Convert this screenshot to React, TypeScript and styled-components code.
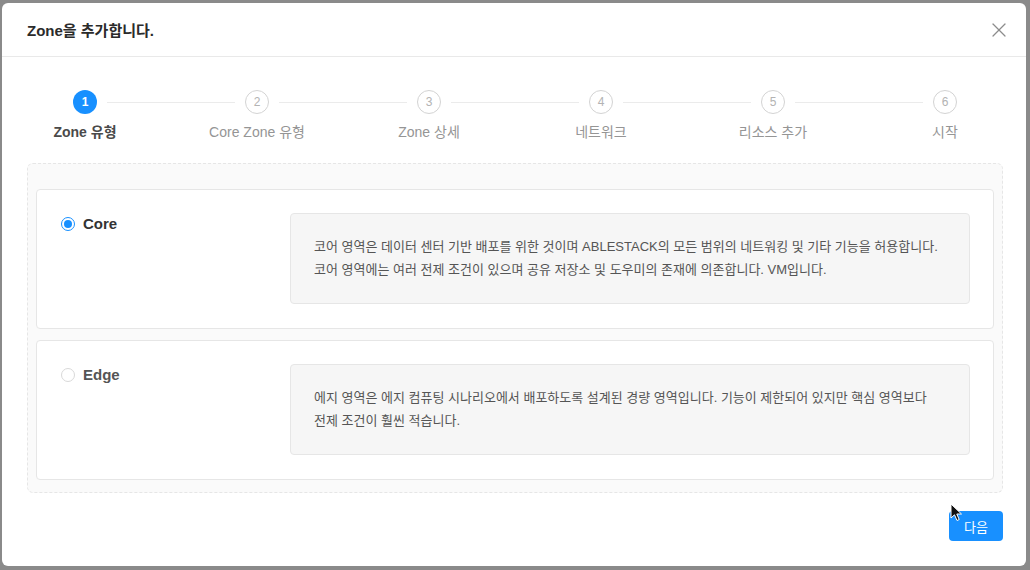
import { FC } from 'react';
import styled, { createGlobalStyle } from 'styled-components';
import { X } from 'lucide-react';

const GlobalStyle = createGlobalStyle`
  html, body {
    margin: 0;
    padding: 0;
    background: #8a8a8a;
  }
  body {
    font-family: "Liberation Sans", "Noto Sans CJK KR", sans-serif;
    -webkit-font-smoothing: antialiased;
  }
`;

const steps = ['Zone 유형', 'Core Zone 유형', 'Zone 상세', '네트워크', '리소스 추가', '시작'];

const zoneTypes = [
  {
    key: 'core',
    label: 'Core',
    checked: true,
    lines: [
      '코어 영역은 데이터 센터 기반 배포를 위한 것이며 ABLESTACK의 모든 범위의 네트워킹 및 기타 기능을 허용합니다.',
      '코어 영역에는 여러 전제 조건이 있으며 공유 저장소 및 도우미의 존재에 의존합니다. VM입니다.',
    ],
  },
  {
    key: 'edge',
    label: 'Edge',
    checked: false,
    lines: [
      '에지 영역은 에지 컴퓨팅 시나리오에서 배포하도록 설계된 경량 영역입니다. 기능이 제한되어 있지만 핵심 영역보다',
      '전제 조건이 훨씬 적습니다.',
    ],
  },
];

const App: FC = () => {
  return (
    <>
      <GlobalStyle />
      <PageStyled>
        <ModalStyled>
          <HeaderStyled>
            <TitleStyled>Zone을 추가합니다.</TitleStyled>
            <CloseStyled>
              <X size={24} strokeWidth={1.2} />
            </CloseStyled>
          </HeaderStyled>
          <BodyStyled>
            <StepsStyled>
              {steps.map((title, i) => (
                <StepStyled key={title} last={i === steps.length - 1}>
                  <StepHeadStyled>
                    <StepIconStyled active={i === 0}>{i + 1}</StepIconStyled>
                    {i < steps.length - 1 && <StepTailStyled />}
                  </StepHeadStyled>
                  <StepTitleStyled active={i === 0}>{title}</StepTitleStyled>
                </StepStyled>
              ))}
            </StepsStyled>
            <ContentBoxStyled>
              {zoneTypes.map((zone) => (
                <ZoneCardStyled key={zone.key}>
                  <RadioLabelStyled>
                    <RadioStyled checked={zone.checked} />
                    <RadioTextStyled checked={zone.checked}>{zone.label}</RadioTextStyled>
                  </RadioLabelStyled>
                  <DescStyled>
                    {zone.lines.map((line) => (
                      <div key={line}>{line}</div>
                    ))}
                  </DescStyled>
                </ZoneCardStyled>
              ))}
            </ContentBoxStyled>
            <FooterStyled>
              <PrimaryButtonStyled>다음</PrimaryButtonStyled>
              <CursorStyled width="13" height="19" viewBox="0 0 13 19">
                <path
                  d="M1 1 L1 15 L4.5 11.8 L7 17.5 L9.2 16.5 L6.8 11 L11.5 11 Z"
                  fill="#111"
                  stroke="#fff"
                  strokeWidth="1"
                  strokeLinejoin="round"
                />
              </CursorStyled>
            </FooterStyled>
          </BodyStyled>
        </ModalStyled>
      </PageStyled>
    </>
  );
};

const PageStyled = styled.div`
  width: 1030px;
  height: 570px;
  box-sizing: border-box;
  padding: 3px 4px 4px 2px;
  overflow: hidden;
`;

const ModalStyled = styled.div`
  width: 1024px;
  height: 563px;
  background: #fff;
  border-radius: 6px;
  display: flex;
  flex-direction: column;
  overflow: hidden;
`;

const HeaderStyled = styled.div`
  height: 53px;
  flex: none;
  box-sizing: content-box;
  border-bottom: 1px solid #e9e9e9;
  padding: 0 15px 0 25px;
  display: flex;
  align-items: center;
  justify-content: space-between;
`;

const TitleStyled = styled.div`
  font-size: 15px;
  font-weight: 600;
  color: #2b2b2b;
`;

const CloseStyled = styled.div`
  width: 24px;
  height: 24px;
  color: #8c8c8c;
  display: flex;
  align-items: center;
  justify-content: center;
`;

const BodyStyled = styled.div`
  padding: 33px 23px 0 25px;
  display: flex;
  flex-direction: column;
`;

const StepsStyled = styled.div`
  display: flex;
`;

const StepStyled = styled.div<{ last: boolean }>`
  display: flex;
  flex-direction: column;
  ${({ last }) => (last ? 'flex: none; width: 116px;' : 'flex: 1;')}
`;

const StepHeadStyled = styled.div`
  display: flex;
  align-items: center;
  padding-left: 46px;
  height: 24px;
`;

const StepIconStyled = styled.div<{ active: boolean }>`
  width: 24px;
  height: 24px;
  flex: none;
  box-sizing: border-box;
  border-radius: 50%;
  display: flex;
  align-items: center;
  justify-content: center;
  font-size: 12px;
  ${({ active }) =>
    active
      ? `
    background: #1890ff;
    color: #fff;
    font-weight: 600;
  `
      : `
    background: #fff;
    border: 1px solid #d3d3d3;
    color: #b3b3b3;
  `}
`;

const StepTailStyled = styled.div`
  flex: 1;
  height: 1px;
  background: #ebebeb;
  margin: 0 -36px 0 10px;
`;

const StepTitleStyled = styled.div<{ active: boolean }>`
  width: 116px;
  margin-top: 7px;
  text-align: center;
  font-size: 14px;
  line-height: 22px;
  color: ${({ active }) => (active ? '#4a4a4a' : '#959595')};
  font-weight: ${({ active }) => (active ? 600 : 400)};
`;

const ContentBoxStyled = styled.div`
  margin-top: 20px;
  height: 330px;
  box-sizing: border-box;
  background: #fafafa;
  border: 1px dashed #e6e6e6;
  border-radius: 6px;
  padding: 25px 8px 12px 8px;
  display: flex;
  flex-direction: column;
  gap: 11px;
`;

const ZoneCardStyled = styled.div`
  height: 140px;
  box-sizing: border-box;
  background: #fff;
  border: 1px solid #e6e6e6;
  border-radius: 4px;
  padding: 23px 23px 24px 24px;
  display: flex;
`;

const RadioLabelStyled = styled.div`
  width: 229px;
  flex: none;
  display: flex;
  align-items: flex-start;
  height: 22px;
`;

const RadioStyled = styled.span<{ checked: boolean }>`
  width: 14px;
  height: 14px;
  margin-top: 4px;
  box-sizing: border-box;
  border-radius: 50%;
  background: #fff;
  border: 1px solid ${({ checked }) => (checked ? '#1890ff' : '#d9d9d9')};
  display: flex;
  align-items: center;
  justify-content: center;
  &::after {
    content: '';
    width: 8px;
    height: 8px;
    border-radius: 50%;
    background: ${({ checked }) => (checked ? '#1890ff' : 'transparent')};
  }
`;

const RadioTextStyled = styled.span<{ checked: boolean }>`
  margin-left: 8px;
  font-size: 15px;
  line-height: 22px;
  font-weight: 700;
  color: ${({ checked }) => (checked ? '#333' : '#555')};
`;

const DescStyled = styled.div`
  flex: 1;
  background: #f6f6f6;
  border: 1px solid #e6e6e6;
  border-radius: 4px;
  padding: 21px 23px 22px;
  font-size: 13px;
  line-height: 23px;
  color: #555;
  white-space: nowrap;
`;

const FooterStyled = styled.div`
  position: relative;
  margin-top: 18px;
  display: flex;
  justify-content: flex-end;
`;

const PrimaryButtonStyled = styled.button`
  width: 54px;
  height: 30px;
  border: none;
  border-radius: 4px;
  background: #1890ff;
  color: #fff;
  font-family: inherit;
  font-size: 13px;
  padding: 0;
  cursor: pointer;
`;

const CursorStyled = styled.svg`
  position: absolute;
  right: 40px;
  top: -8px;
`;

export default App;
